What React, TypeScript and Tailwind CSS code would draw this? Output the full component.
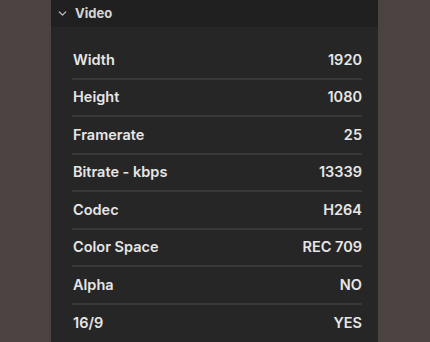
import { ChevronDown } from "lucide-react"

const rows = [
  ["Width", "1920"],
  ["Height", "1080"],
  ["Framerate", "25"],
  ["Bitrate - kbps", "13339"],
  ["Codec", "H264"],
  ["Color Space", "REC 709"],
  ["Alpha", "NO"],
  ["16/9", "YES"],
]

export default function App() {
  return (
    <div
      className="flex h-[342px] w-[430px] overflow-hidden bg-[#4a4342]"
      style={{ fontFamily: "Inter, 'Liberation Sans', sans-serif" }}
    >
      <div className="ml-[51px] flex w-[327px] flex-col bg-[#262626]">
        {/* Header */}
        <div className="flex h-[27px] items-center gap-[6px] bg-[#202020] pl-[5px]">
          <ChevronDown className="h-[13px] w-[13px] text-[#bdbdbd]" strokeWidth={2.5} />
          <span className="text-[13px] font-bold text-[#d6d6d6]">Video</span>
        </div>

        {/* Rows */}
        <div className="flex flex-col pt-[15px] pl-[21px] pr-[16px]">
          {rows.map(([label, value], i) => (
            <div
              key={label}
              className={`flex h-[37.5px] items-center justify-between pl-[1px] text-[14.5px] font-semibold text-[#e6e6e6] ${
                i < rows.length - 1 ? "border-b-2 border-[#383838]" : ""
              }`}
            >
              <span>{label}</span>
              <span>{value}</span>
            </div>
          ))}
        </div>
      </div>
    </div>
  )
}
